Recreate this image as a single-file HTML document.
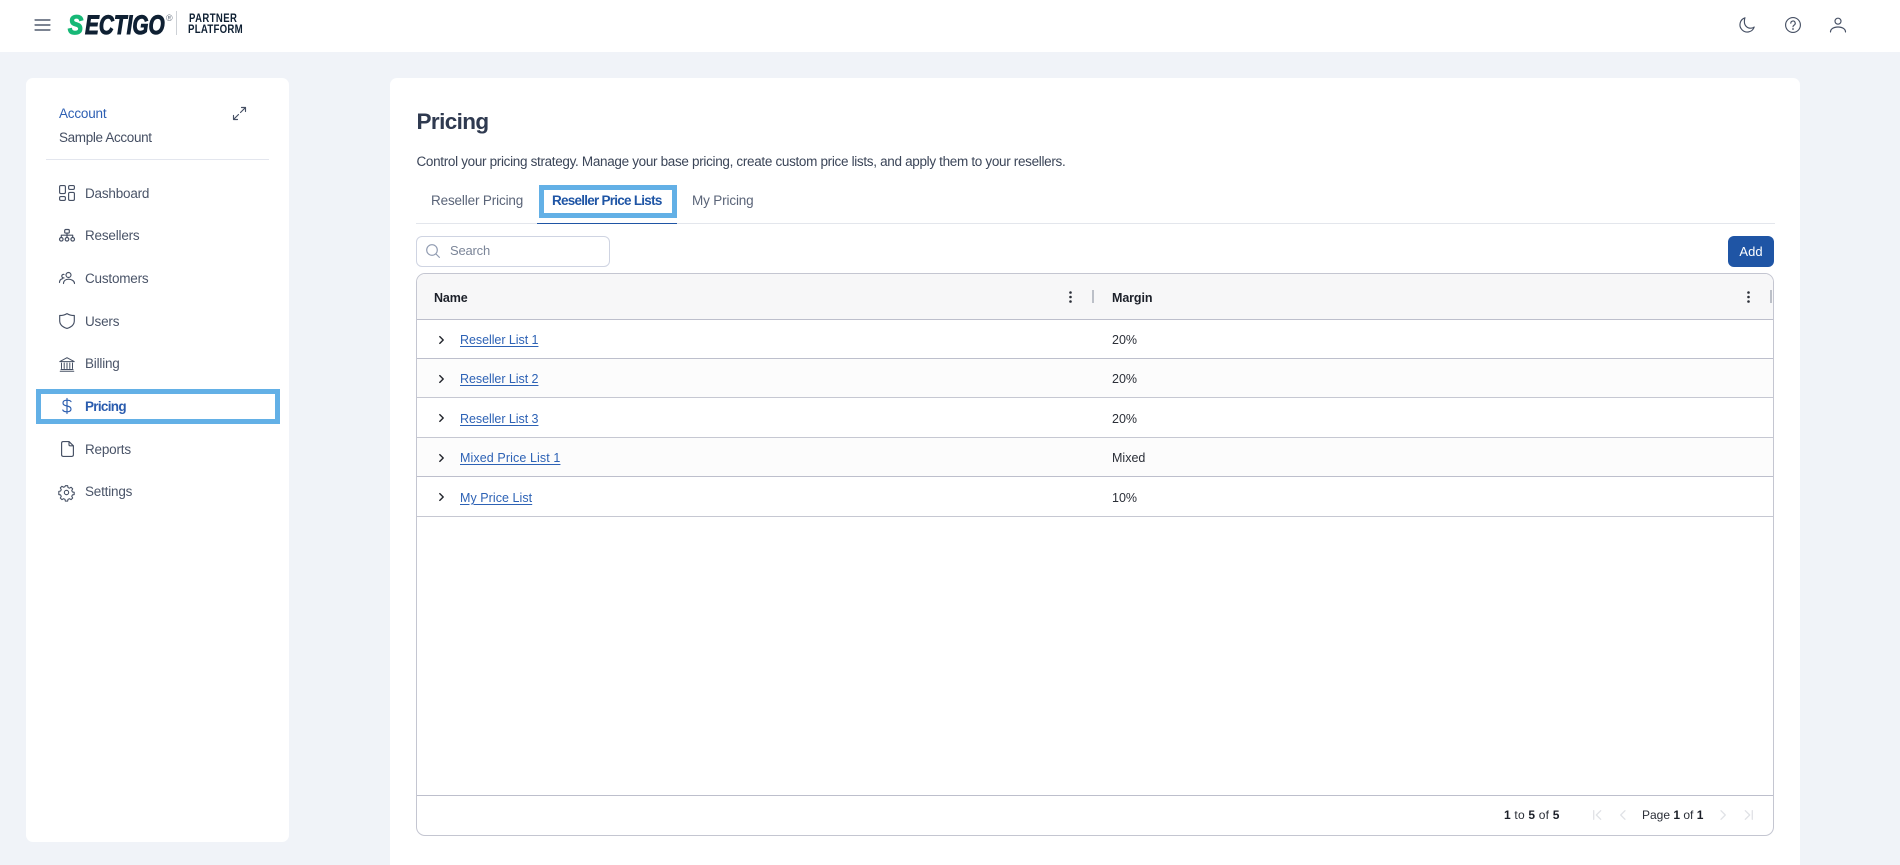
<!DOCTYPE html>
<html lang="en"><head><meta charset="utf-8"><title>Pricing</title>
<style>
*{box-sizing:border-box}
html,body{margin:0;padding:0;width:1900px;height:865px;overflow:hidden;background:#f0f3f8;font-family:"Liberation Sans",sans-serif;color:#3f4a5f}
body{position:relative}
.a{position:absolute;white-space:nowrap}
.t{position:absolute;white-space:nowrap;line-height:18px;height:18px}
svg{position:absolute;fill:none;stroke:#465064;stroke-width:1.15;stroke-linecap:round;stroke-linejoin:round;overflow:visible}
.nav{font-size:13.5px;letter-spacing:-.2px;left:85px;color:#4a5468}
.tab{font-size:13.5px;top:192px;letter-spacing:-.15px;color:#5a6478}
.ln{position:absolute;left:417px;width:1356px;height:1px;background:#bdbfcc}
.cell{font-size:12.5px;color:#2b2f38}
.lk{font-size:12.5px;left:460px;color:#2d62b5;text-decoration:underline;text-underline-offset:2px}
.pg{font-size:12px;color:#2b2f38;top:806px}
b{color:#1c2029}
</style></head><body>
<div class="a" style="left:0;top:0;width:1900px;height:52px;background:#fff"></div>
<svg style="left:34px;top:19px;stroke:#2e3a50" width="17" height="12" viewBox="0 0 17 12" stroke-width="1.6"><path d="M1 1h15M1 6h15M1 11h15"/></svg>
<div class="a" style="left:68px;top:10px;font:italic 700 27px/30px 'Liberation Sans',sans-serif;color:#17b877;-webkit-text-stroke:1.3px #17b877;transform-origin:0 50%;transform:scaleX(.84)">S</div>
<div class="a" style="left:85px;top:10px;font:italic 700 27px/30px 'Liberation Sans',sans-serif;color:#0f2033;-webkit-text-stroke:1px #0f2033;transform-origin:0 50%;transform:scaleX(.77)">ECTIGO</div>
<div class="a" style="left:166px;top:13px;font:9px/10px 'Liberation Sans',sans-serif;color:#6a7482">®</div>
<div class="a" style="left:176px;top:11px;width:1px;height:24px;background:#cdd1d6"></div>
<div class="a" style="left:189px;top:13px;font:700 11.5px/12px 'Liberation Sans',sans-serif;letter-spacing:.5px;color:#0f2033;transform-origin:0 50%;transform:scaleX(.83)">PARTNER</div>
<div class="a" style="left:188px;top:24px;font:700 11.5px/12px 'Liberation Sans',sans-serif;letter-spacing:.3px;color:#0f2033;transform-origin:0 50%;transform:scaleX(.84)">PLATFORM</div>
<svg style="left:1739px;top:17px" width="16" height="16" viewBox="0 0 16 16"><path d="M6 .8A7.300 7.300 0 1 0 15.200 10c-.9.900-2.200 1.200-3.500 1.200A6.200 6.200 0 0 1 5.400 5C5.400 3.600 5.400 2 6 .8Z"/></svg>
<svg style="left:1785px;top:17px" width="16" height="16" viewBox="0 0 16 16"><circle cx="8" cy="8" r="7.400"/><path d="M5.800 6.200a2.200 2.200 0 1 1 3.300 1.900c-.7.400-1.100.900-1.100 1.700"/><path d="M8 12h.01" stroke-width="1.800"/></svg>
<svg style="left:1830px;top:17px" width="16" height="16" viewBox="0 0 16 16"><circle cx="8" cy="4.200" r="3"/><path d="M.5 15c0-3 3-5 7.500-5s7.500 2 7.500 5"/></svg>

<div class="a" style="left:26px;top:78px;width:263px;height:764px;background:#fff;border-radius:7px"></div>
<div class="t" style="left:59px;top:105px;font-size:13.5px;letter-spacing:-.2px;color:#2d5fb3">Account</div>
<div class="t" style="left:59px;top:129px;font-size:13.5px;letter-spacing:-.35px;color:#454f63">Sample Account</div>
<svg style="left:233px;top:107px" width="13" height="13" viewBox="0 0 13 13"><path d="M7.500 5.500 12.500.5M8.500.5h4v4M5.500 7.500l-5 5M.5 8.500v4h4"/></svg>
<div class="a" style="left:46px;top:159px;width:223px;height:1px;background:#e3e6ee"></div>

<svg style="left:59px;top:185px" width="16" height="16" viewBox="0 0 16 16"><rect x=".6" y=".6" width="5.800" height="8" rx="1.300"/><rect x="9.600" y=".6" width="5.800" height="3.800" rx="1.300"/><rect x="9.600" y="7.400" width="5.800" height="8" rx="1.300"/><rect x=".6" y="11.600" width="5.800" height="3.800" rx="1.300"/></svg>
<div class="t nav" style="top:185px">Dashboard</div>
<svg style="left:59px;top:229px" width="16" height="13" viewBox="0 0 16 13"><rect x="5.700" y=".5" width="4.600" height="3.600" rx="1"/><path d="M8 4.100v4M2.300 8V6.200h11.400V8"/><circle cx="2.300" cy="10.300" r="1.800"/><circle cx="8" cy="10.300" r="1.800"/><circle cx="13.700" cy="10.300" r="1.800"/></svg>
<div class="t nav" style="top:227px">Resellers</div>
<svg style="left:59px;top:272px" width="16" height="12" viewBox="0 0 16 12"><circle cx="9.500" cy="3" r="2.500"/><path d="M4.500 11.500c0-2.600 2-4.300 5-4.300s6 1.700 6 4.300M.5 10.500c0-2 1-3.300 3-3.800M5 6C3.300 6 2.600 4.800 2.800 3.800 3 2.700 4 2.200 5 2.400"/></svg>
<div class="t nav" style="top:270px">Customers</div>
<svg style="left:59px;top:313px" width="16" height="16" viewBox="0 0 16 16"><path d="M8 .6c2 1.300 4.500 1.900 7.300 1.900v5.200c0 3.900-3 6.400-7.300 7.700C3.700 14.100.7 11.600.7 7.700V2.500C3.500 2.500 6 1.900 8 .6Z"/></svg>
<div class="t nav" style="top:313px">Users</div>
<svg style="left:59px;top:357px;stroke-width:1" width="16" height="15" viewBox="0 0 16 15"><path d="M.8 4.600 8 .7l7.200 3.900ZM2.500 6v5.500M5.200 6v5.500M8 6v5.500M10.800 6v5.500M13.500 6v5.500M1.200 14.200h13.600M2 12.500h12"/></svg>
<div class="t nav" style="top:355px">Billing</div>

<div class="a" style="left:36px;top:389px;width:244px;height:35px;border:5px solid #63b0e6"></div>
<svg style="left:62px;top:398px" width="10" height="16" viewBox="0 0 10 16"><path stroke="#2a5cae" d="M5 .5v15M9 3.600C8.400 2.600 7 2.200 5 2.200 2.600 2.200 1 3.200 1 5c0 1.900 1.800 2.600 4 3 2.300.4 4 1.100 4 3 0 1.800-1.600 2.800-4 2.800-2.100 0-3.700-.6-4.200-1.800"/></svg>
<div class="t nav" style="top:398px;color:#2a5cae;font-weight:700;letter-spacing:-.7px">Pricing</div>
<svg style="left:61px;top:441px" width="13" height="16" viewBox="0 0 13 16"><path d="M8 .6H2.200C1.200.6.600 1.200.600 2.200v11.600c0 1 .6 1.600 1.600 1.600h8.600c1 0 1.600-.6 1.600-1.600V4.800L8 .6ZM8 .6v3c0 .8.400 1.200 1.200 1.200h3.200"/></svg>
<div class="t nav" style="top:441px">Reports</div>
<svg style="left:59px;top:485px" width="15" height="15" viewBox="0 0 16 16"><circle cx="8" cy="8" r="2.300"/><path d="M6.800.7h2.400l.4 2 1.500.7 1.800-1 1.700 1.700-1 1.800.7 1.500 1.900.4v2.400l-1.900.4-.7 1.500 1 1.800-1.700 1.700-1.800-1-1.500.7-.4 1.900H6.800l-.4-1.900-1.500-.7-1.800 1-1.700-1.700 1-1.800-.7-1.500-1.900-.4V6.800l1.900-.4.7-1.500-1-1.800 1.700-1.700 1.800 1 1.500-.7Z"/></svg>
<div class="t nav" style="top:483px">Settings</div>

<div class="a" style="left:390px;top:78px;width:1410px;height:787px;background:#fff;border-radius:7px 7px 0 0"></div>
<div class="a" style="left:416.500px;top:107px;font-size:22.500px;line-height:29px;color:#2f3a50;font-weight:700;letter-spacing:-.6px">Pricing</div>
<div class="t" style="left:416.500px;top:153px;font-size:13.500px;letter-spacing:-.32px;color:#3b4558">Control your pricing strategy. Manage your base pricing, create custom price lists, and apply them to your resellers.</div>
<div class="a" style="left:416px;top:223px;width:1359px;height:1px;background:#e3e6ec"></div>
<div class="a" style="left:537px;top:223px;width:140px;height:1px;background:#1f55a5"></div>
<div class="t tab" style="left:431px">Reseller Pricing</div>
<div class="a" style="left:539px;top:185px;width:138px;height:33px;border:5px solid #63b0e6"></div>
<div class="t tab" style="left:552px;color:#1f55a5;font-weight:700;letter-spacing:-.75px">Reseller Price Lists</div>
<div class="t tab" style="left:692px">My Pricing</div>

<div class="a" style="left:416px;top:236px;width:194px;height:31px;border:1px solid #cfd4e2;border-radius:6px;background:#fff"></div>
<svg style="left:426px;top:244px;stroke:#8f9ab0" width="14" height="14" viewBox="0 0 14 14"><circle cx="6" cy="6" r="5.300"/><path d="m10 10 3.400 3.400"/></svg>
<div class="t" style="left:450px;top:242px;font-size:13px;letter-spacing:-.2px;color:#7b8598">Search</div>
<div class="a" style="left:1728px;top:236px;width:46px;height:31px;border-radius:6px;background:#1f55a5;color:#fff;font-size:13px;line-height:31px;text-align:center">Add</div>

<div class="a" style="left:416px;top:273px;width:1358px;height:563px;border:1px solid #c4c6d1;border-radius:9px;overflow:hidden;background:#fff">
<div style="position:absolute;left:0;top:0;width:100%;height:45px;background:#f7f7f8"></div>
<div style="position:absolute;left:0;top:84.500px;width:100%;height:39px;background:#fcfcfc"></div>
<div style="position:absolute;left:0;top:163px;width:100%;height:39px;background:#fcfcfc"></div>
</div>
<div class="ln" style="top:319px"></div><div class="ln" style="top:358px"></div><div class="ln" style="top:397px;background:#c6c8d2"></div><div class="ln" style="top:437px;background:#c6c8d2"></div><div class="ln" style="top:476px"></div><div class="ln" style="top:516px;background:#c6c8d2"></div><div class="ln" style="top:795px"></div>

<div class="t cell" style="left:434px;top:289px;font-weight:700;color:#1c2029;letter-spacing:-.1px">Name</div>
<div class="t cell" style="left:1112px;top:289px;font-weight:700;color:#1c2029;letter-spacing:-.1px">Margin</div>
<svg style="left:1069px;top:291px;stroke:none;fill:#2b2f38" width="3" height="12" viewBox="0 0 3 12"><circle cx="1.500" cy="1.500" r="1.300"/><circle cx="1.500" cy="6" r="1.300"/><circle cx="1.500" cy="10.500" r="1.300"/></svg>
<div class="a" style="left:1092px;top:290px;width:2px;height:13px;background:#bcc0c8"></div>
<svg style="left:1747px;top:291px;stroke:none;fill:#2b2f38" width="3" height="12" viewBox="0 0 3 12"><circle cx="1.500" cy="1.500" r="1.300"/><circle cx="1.500" cy="6" r="1.300"/><circle cx="1.500" cy="10.500" r="1.300"/></svg>
<div class="a" style="left:1770px;top:290px;width:2px;height:13px;background:#bcc0c8"></div>

<svg style="left:439px;top:336px;stroke:#23262d;stroke-width:1.400" width="5" height="8" viewBox="0 0 5 8"><path d="m.8.600 3.400 3.400L.8 7.400"/></svg>
<div class="t lk" style="top:331px;letter-spacing:-.05px">Reseller List 1</div><div class="t cell" style="left:1112px;top:331px">20%</div>
<svg style="left:439px;top:375px;stroke:#23262d;stroke-width:1.400" width="5" height="8" viewBox="0 0 5 8"><path d="m.8.600 3.400 3.400L.8 7.400"/></svg>
<div class="t lk" style="top:370px;letter-spacing:-.05px">Reseller List 2</div><div class="t cell" style="left:1112px;top:370px">20%</div>
<svg style="left:439px;top:414px;stroke:#23262d;stroke-width:1.400" width="5" height="8" viewBox="0 0 5 8"><path d="m.8.600 3.400 3.400L.8 7.400"/></svg>
<div class="t lk" style="top:410px;letter-spacing:-.05px">Reseller List 3</div><div class="t cell" style="left:1112px;top:410px">20%</div>
<svg style="left:439px;top:454px;stroke:#23262d;stroke-width:1.400" width="5" height="8" viewBox="0 0 5 8"><path d="m.8.600 3.400 3.400L.8 7.400"/></svg>
<div class="t lk" style="top:449px;letter-spacing:.1px">Mixed Price List 1</div><div class="t cell" style="left:1112px;top:449px">Mixed</div>
<svg style="left:439px;top:493px;stroke:#23262d;stroke-width:1.400" width="5" height="8" viewBox="0 0 5 8"><path d="m.8.600 3.400 3.400L.8 7.400"/></svg>
<div class="t lk" style="top:489px;letter-spacing:.05px">My Price List</div><div class="t cell" style="left:1112px;top:489px">10%</div>

<div class="t pg" style="left:1504px;letter-spacing:.2px"><b>1</b> to <b>5</b> of <b>5</b></div>
<svg style="left:1593px;top:810px;stroke:#e0e2e6;stroke-width:1.300" width="9" height="10" viewBox="0 0 9 10"><path d="M.7.700v8.600M7.700.700 3.300 5l4.400 4.300"/></svg>
<svg style="left:1620px;top:810px;stroke:#e0e2e6;stroke-width:1.300" width="6" height="10" viewBox="0 0 6 10"><path d="M5 .700.700 5 5 9.300"/></svg>
<div class="t pg" style="left:1642px">Page <b>1</b> of <b>1</b></div>
<svg style="left:1720px;top:810px;stroke:#e0e2e6;stroke-width:1.300" width="6" height="10" viewBox="0 0 6 10"><path d="M1 .700 5.300 5 1 9.300"/></svg>
<svg style="left:1744px;top:810px;stroke:#e0e2e6;stroke-width:1.300" width="9" height="10" viewBox="0 0 9 10"><path d="M8.300.700v8.600M1.300.700 5.700 5 1.300 9.300"/></svg>
</body></html>
